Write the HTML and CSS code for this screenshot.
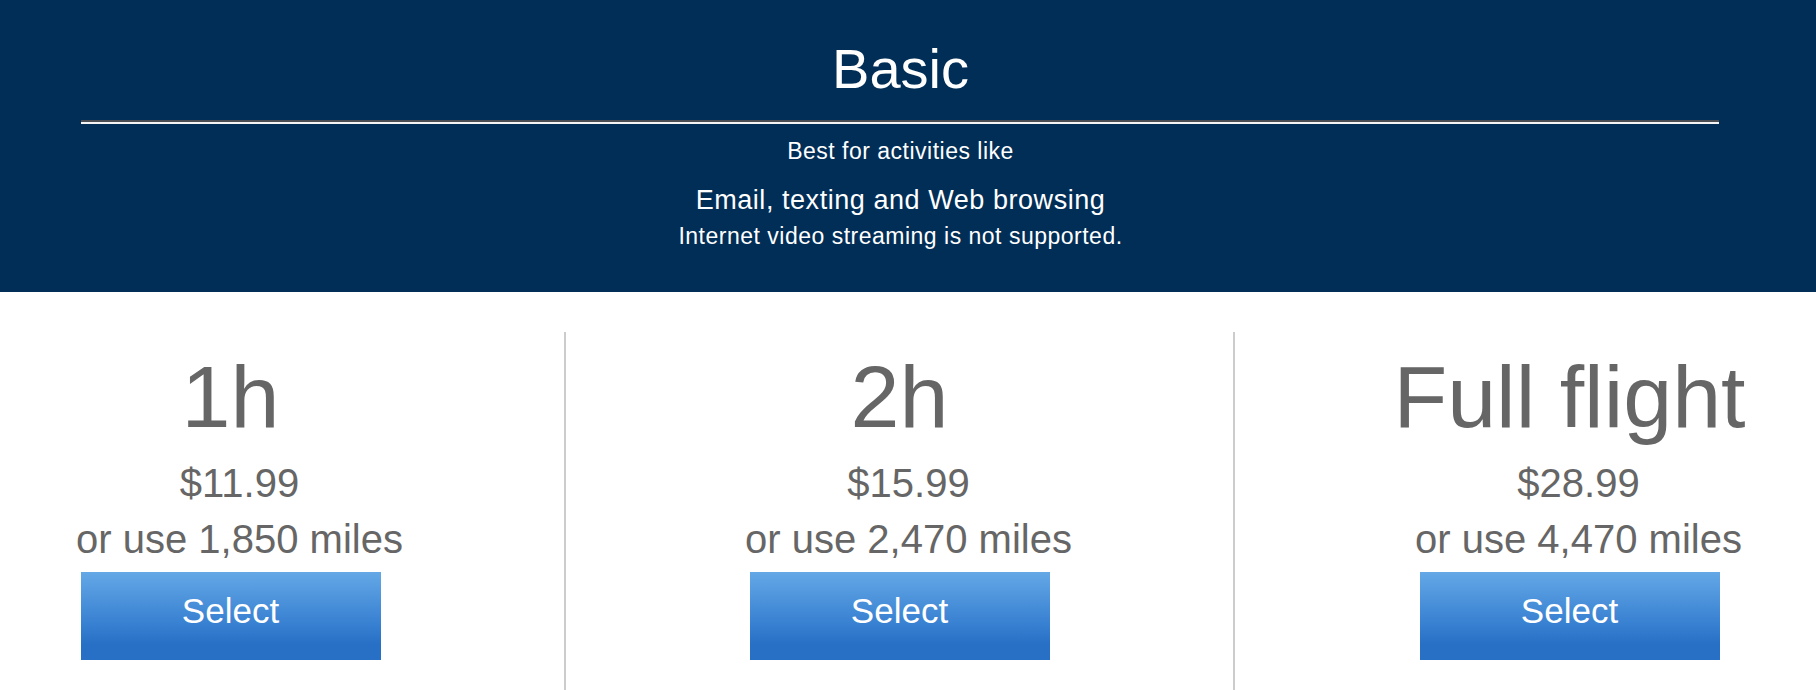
FILE: index.html
```html
<!DOCTYPE html>
<html lang="en">
<head>
  <meta charset="UTF-8" />
  <meta name="viewport" content="width=device-width, initial-scale=1.0" />
  <title>Wi-Fi Passes</title>
  <link rel="stylesheet" href="styles.css">
</head>
<body>
  <div class="page">
    <div class="plan-header">
      <h1>Basic</h1>
      <hr class="rule">
      <div class="best-for">Best for activities like</div>
      <div class="activities">Email, texting and Web browsing</div>
      <div class="note">Internet video streaming is not supported.</div>
    </div>

    <div class="passes">
      <div class="pass">
        <div class="duration">1h</div>
        <div class="cost">
          <div class="price">$11.99</div>
          <div class="miles">or use 1,850 miles</div>
        </div>
        <button class="select-btn">Select</button>
      </div>
      <div class="pass">
        <div class="duration">2h</div>
        <div class="cost">
          <div class="price">$15.99</div>
          <div class="miles">or use 2,470 miles</div>
        </div>
        <button class="select-btn">Select</button>
      </div>
      <div class="pass">
        <div class="duration">Full flight</div>
        <div class="cost">
          <div class="price">$28.99</div>
          <div class="miles">or use 4,470 miles</div>
        </div>
        <button class="select-btn">Select</button>
      </div>
    </div>
  </div>
</body>
</html>
```

FILE: styles.css
```css
html, body {
  margin: 0;
  padding: 0;
  background: #ffffff;
  font-family: "Liberation Sans", Arial, Helvetica, sans-serif;
  overflow: hidden;
}

/* page is wider than the window, shifted so the middle column sits at center */
.page {
  width: 2007px;
  margin-left: -103px;
}

.plan-header {
  background: #002e57;
  color: #ffffff;
  text-align: center;
  padding: 37px 0 42px 0;
}

.plan-header h1 {
  font-size: 56px;
  line-height: 64px;
  font-weight: normal;
  margin: 0;
}

.rule {
  height: 0;
  margin: 19px 185px 0 184px;
  border: none;
  border-top: 2px solid #4a4d52;
  border-bottom: 2px solid #f4f4f4;
}

.best-for {
  font-size: 23px;
  line-height: 28px;
  letter-spacing: 0.5px;
  margin-top: 13px;
}

.activities {
  font-size: 27px;
  line-height: 32px;
  letter-spacing: 0.55px;
  margin-top: 19px;
}

.note {
  font-size: 23px;
  line-height: 28px;
  letter-spacing: 0.5px;
  margin-top: 6px;
}

.passes {
  display: grid;
  grid-template-columns: repeat(3, 669px);
  margin-top: 40px;
}

.pass {
  display: flex;
  flex-direction: column;
  align-items: center;
  padding: 15px 0 60px 0;
  color: #666666;
  text-align: center;
}

.pass:not(:last-child) {
  border-right: 2px solid #cccccc;
}

.duration {
  font-size: 88px;
  line-height: 100px;
}

.cost {
  padding-left: 18px;
  margin-top: 8px;
  font-size: 40px;
  line-height: 56px;
}

.select-btn {
  margin-top: 5px;
  width: 300px;
  height: 88px;
  padding: 0 0 10px 0;
  border: none;
  border-radius: 0;
  background: linear-gradient(#64a8e6, #3b83d3 55%, #2870c5 82%, #2870c5);
  color: #ffffff;
  font-family: inherit;
  font-size: 35px;
  line-height: 78px;
  cursor: pointer;
}
```
